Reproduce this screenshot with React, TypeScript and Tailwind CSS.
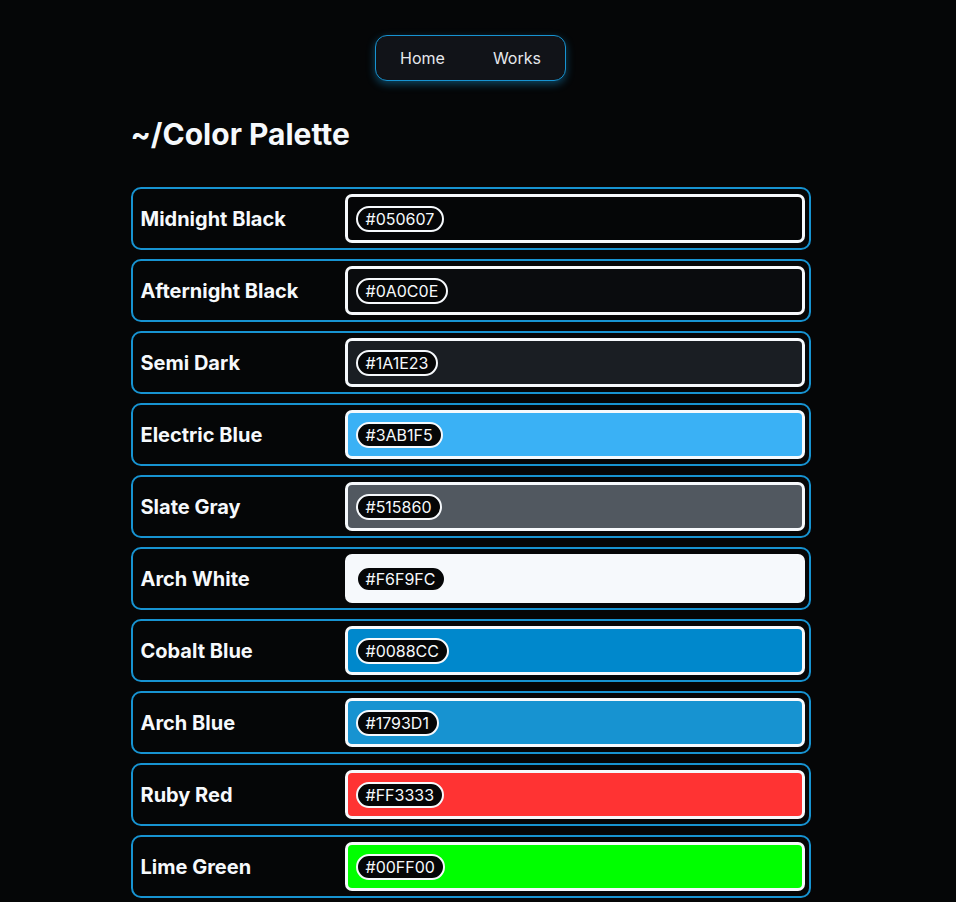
import React from 'react'

interface Swatch {
  name: string
  hex: string
}

const palette: Swatch[] = [
  { name: 'Midnight Black', hex: '#050607' },
  { name: 'Afternight Black', hex: '#0A0C0E' },
  { name: 'Semi Dark', hex: '#1A1E23' },
  { name: 'Electric Blue', hex: '#3AB1F5' },
  { name: 'Slate Gray', hex: '#515860' },
  { name: 'Arch White', hex: '#F6F9FC' },
  { name: 'Cobalt Blue', hex: '#0088CC' },
  { name: 'Arch Blue', hex: '#1793D1' },
  { name: 'Ruby Red', hex: '#FF3333' },
  { name: 'Lime Green', hex: '#00FF00' },
]

const Nav = () => (
  <nav className="flex justify-center pt-[35px]">
    <div className="flex h-[46px] items-center rounded-xl border border-[#1793D1] bg-[#111318] shadow-[0_3px_8px_rgba(23,147,209,0.45)]">
      <a className="px-6 text-base text-[#e6e8ec]">Home</a>
      <a className="px-6 text-base text-[#e6e8ec]">Works</a>
    </div>
  </nav>
)

const ColorRow = ({ name, hex }: Swatch) => (
  <div className="flex h-[63px] items-center rounded-[10px] border-2 border-[#1793D1] bg-[#050607] py-[5px] pl-2 pr-1">
    <div className="w-[204px] text-xl font-bold text-[#f6f9fc]">{name}</div>
    <div
      className="flex h-[49px] flex-1 items-center rounded-[7px] border-[3px] border-[#f6f9fc] pl-2"
      style={{ backgroundColor: hex }}
    >
      <span className="rounded-full border-2 border-[#f6f9fc] bg-[#050607] px-2 text-base leading-[22px] text-[#f6f9fc]">
        {hex}
      </span>
    </div>
  </div>
)

export default function App() {
  return (
    <div
      className="min-h-screen bg-[#050607] pr-[15px]"
      style={{ fontFamily: 'Inter, "Noto Sans", sans-serif' }}
    >
      <Nav />
      <main className="mx-auto w-[680px]">
        <h1 className="mt-[35px] mb-[35px] text-3xl font-bold text-[#f6f9fc]">
          ~/Color Palette
        </h1>
        <div className="flex flex-col gap-[9px]">
          {palette.map((c) => (
            <ColorRow key={c.hex} {...c} />
          ))}
        </div>
      </main>
    </div>
  )
}
